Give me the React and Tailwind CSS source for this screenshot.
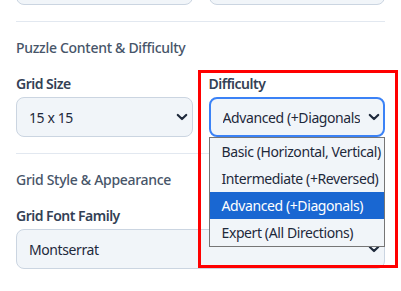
import React from "react";

function Chevron({ className = "" }) {
  return (
    <svg width="12" height="12" viewBox="0 0 12 12" className={className}>
      <path d="M1.8 4 L6 8 L10.2 4" fill="none" stroke="#1e293b" strokeWidth="2.2" strokeLinecap="round" strokeLinejoin="round" />
    </svg>
  );
}

function SelectBox({ value, focused = false, clip = false }) {
  return (
    <div
      className={
        "flex h-10 items-center justify-between rounded-lg bg-[#f1f5f9] " +
        (focused ? "border-2 border-[#3b82f6] pl-[12px] pr-[3px]" : "border border-[#cbd5e1] pl-[12px] pr-[4px]")
      }
    >
      <span
        className={
          "text-[14px] tracking-[-0.4px] text-[#1e293b] whitespace-nowrap " +
          (clip ? "overflow-hidden w-[137px]" : "")
        }
      >
        {value}
      </span>
      <Chevron />
    </div>
  );
}

function Label({ children }) {
  return (
    <div className="mb-[2px] text-[14px] font-semibold leading-[22px] tracking-[-0.5px] text-[#334155]">
      {children}
    </div>
  );
}

function Heading({ children }) {
  return <div className="text-[14px] font-medium leading-5 tracking-[-0.3px] text-[#475569]">{children}</div>;
}

export default function App() {
  const options = [
    "Basic (Horizontal, Vertical)",
    "Intermediate (+Reversed)",
    "Advanced (+Diagonals)",
    "Expert (All Directions)",
  ];
  return (
    <div className="relative h-[291px] w-[401px] overflow-hidden bg-white font-['Noto_Sans',sans-serif]">
      <div className="px-4">
        <div className="-mt-[35px] grid grid-cols-2 gap-4">
          <div className="h-10 rounded-lg border border-[#cbd5e1] bg-[#f1f5f9]" />
          <div className="h-10 rounded-lg border border-[#cbd5e1] bg-[#f1f5f9]" />
        </div>
        <div className="mt-4 border-t border-[#e2e8f0]" />
        <div className="pt-4">
          <Heading>Puzzle Content &amp; Difficulty</Heading>
          <div className="mt-[15px] grid grid-cols-2 gap-4">
            <div>
              <Label>Grid Size</Label>
              <SelectBox value="15 x 15" />
            </div>
            <div className="relative">
              <Label>Difficulty</Label>
              <SelectBox value="Advanced (+Diagonals)" focused clip />
              <div className="absolute left-0 right-0 top-[64px] z-10 border border-[#767676] bg-[#f1f5f9]">
                {options.map((o, i) => (
                  <div
                    key={o}
                    className={
                      "h-[27px] pl-[12px] text-[14px] leading-[27px] tracking-[-0.4px] whitespace-nowrap " +
                      (i === 2 ? "bg-[#1967d2] text-white" : "text-[#1e293b]")
                    }
                  >
                    {o}
                  </div>
                ))}
              </div>
            </div>
          </div>
        </div>
        <div className="mt-4 border-t border-[#e2e8f0]" />
        <div className="pt-4">
          <Heading>Grid Style &amp; Appearance</Heading>
          <div className="mt-[15px]">
            <Label>Grid Font Family</Label>
            <SelectBox value="Montserrat" />
          </div>
          <div className="mt-[17px]">
            <Label>Grid Font Size (Scale)</Label>
          </div>
        </div>
      </div>
      <div className="pointer-events-none absolute left-[198px] top-[70px] z-20 h-[198px] w-[200px] border-[3px] border-[#ff0000]" />
    </div>
  );
}
